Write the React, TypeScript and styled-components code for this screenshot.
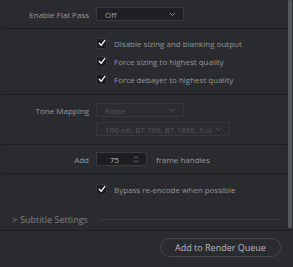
import React from "react";
import styled, { createGlobalStyle } from "styled-components";

const GlobalStyle = createGlobalStyle`
  html, body {
    margin: 0;
    padding: 0;
    background: #2a2b2f;
  }
  body {
    font-family: "Open Sans", "Noto Sans", sans-serif;
    -webkit-font-smoothing: antialiased;
  }
`;

const Page = styled.div`
  width: 293px;
  height: 267px;
  display: flex;
  flex-direction: column;
  background: #2a2b2f;
  overflow: hidden;
`;

const Main = styled.div`
  display: flex;
  height: 230px;
  border-bottom: 1px solid #1b1c1f;
`;

const Content = styled.div`
  flex: 1;
  display: flex;
  flex-direction: column;
  padding-left: 2px;
  padding-right: 1px;
`;

const Scrollbar = styled.div`
  width: 4px;
  margin: 0 1px 2px 0;
  background: #55595e;
  border-radius: 1px;
`;

const Section = styled.div<{ $pt: number; $pb: number; $gap?: number; $last?: boolean }>`
  display: flex;
  flex-direction: column;
  gap: ${(p) => p.$gap ?? 0}px;
  padding-top: ${(p) => p.$pt}px;
  padding-bottom: ${(p) => p.$pb}px;
  border-bottom: ${(p) => (p.$last ? "none" : "1px solid #1b1c1f")};
`;

const Row = styled.div<{ $h?: number }>`
  display: grid;
  grid-template-columns: 87px auto 1fr;
  column-gap: 7px;
  align-items: center;
  height: ${(p) => p.$h ?? 14}px;
  font-size: 8px;
  color: #999a9d;
`;

const Label = styled.span`
  text-align: right;
  white-space: nowrap;
`;

const Select = styled.div<{ $w: number; $disabled?: boolean }>`
  box-sizing: border-box;
  width: ${(p) => p.$w}px;
  height: 14px;
  display: flex;
  align-items: center;
  justify-content: space-between;
  padding: 0 7px 0 8px;
  background: ${(p) => (p.$disabled ? "#2b2c30" : "#1f2023")};
  border: 1px solid ${(p) => (p.$disabled ? "#37383c" : "#3a3b3f")};
  border-radius: 1px;
  color: ${(p) => (p.$disabled ? "#55565a" : "#9c9da0")};
  white-space: nowrap;
`;

const Chevron = ({ color }: { color: string }) => (
  <svg width="7" height="5" viewBox="0 0 7 5">
    <path d="M1 1 L3.5 3.5 L6 1" fill="none" stroke={color} strokeWidth="0.9" />
  </svg>
);

const Spinner = () => (
  <svg width="6" height="9" viewBox="0 0 6 9">
    <path d="M1 3.5 L3 1.5 L5 3.5" fill="none" stroke="#85868a" strokeWidth="0.9" />
    <path d="M1 5.5 L3 7.5 L5 5.5" fill="none" stroke="#85868a" strokeWidth="0.9" />
  </svg>
);

const NumberBox = styled.div`
  box-sizing: border-box;
  width: 51px;
  height: 14px;
  display: flex;
  align-items: center;
  justify-content: space-between;
  padding: 0 7px 0 13px;
  background: #1d1e21;
  border: 1px solid #3a3b3f;
  border-radius: 1px;
  color: #b8b9bc;
`;

const InlineGroup = styled.div`
  display: flex;
  align-items: center;
  gap: 9px;
  grid-column: 2 / 4;
`;

const CheckRow = styled.label`
  display: flex;
  align-items: center;
  gap: 7px;
  height: 18px;
  padding-left: 94px;
  font-size: 8px;
  color: #96979a;
  white-space: nowrap;
`;

const Box = styled.span`
  box-sizing: border-box;
  width: 11px;
  height: 11px;
  display: flex;
  align-items: center;
  justify-content: center;
  background: #1b1c1e;
  border: 1px solid #34353a;
  border-radius: 2px;
`;

const Check = () => (
  <Box>
    <svg width="8" height="8" viewBox="0 0 8 8">
      <path d="M1.3 4.3 L3.2 6.3 L6.8 1.4" fill="none" stroke="#f2f2f2" strokeWidth="1.4" strokeLinecap="round" strokeLinejoin="round" />
    </svg>
  </Box>
);

const Collapsible = styled.div`
  display: flex;
  align-items: center;
  height: 18px;
  margin-top: 12px;
  padding: 0 6px 0 10px;
  gap: 3px;
  font-size: 9px;
  color: #808184;
  white-space: nowrap;
`;

const Rule = styled.div`
  flex: 1;
  height: 1px;
  margin-left: 8px;
  background: #3a3b3f;
`;

const Footer = styled.div`
  flex: 1;
  display: flex;
  justify-content: flex-end;
  align-items: flex-start;
  padding: 7px 12px 0 0;
`;

const PillButton = styled.button`
  box-sizing: border-box;
  width: 121px;
  height: 19px;
  border-radius: 10px;
  border: 1px solid #45464b;
  background: #2a2b2f;
  color: #b9babd;
  font-family: "Open Sans", "Noto Sans", sans-serif;
  font-size: 9px;
  padding: 0;
`;

export default function App() {
  return (
    <Page>
      <GlobalStyle />
      <Main>
        <Content>
          <Section $pt={7} $pb={7}>
            <Row>
              <Label>Enable Flat Pass</Label>
              <Select $w={88}>
                <span>Off</span>
                <Chevron color="#9c9da0" />
              </Select>
            </Row>
          </Section>
          <Section $pt={5} $pb={6}>
            <CheckRow><Check />Disable sizing and blanking output</CheckRow>
            <CheckRow><Check />Force sizing to highest quality</CheckRow>
            <CheckRow><Check />Force debayer to highest quality</CheckRow>
          </Section>
          <Section $pt={8} $pb={8} $gap={5}>
            <Row>
              <Label>Tone Mapping</Label>
              <Select $w={88} $disabled>
                <span>None</span>
                <Chevron color="#55565a" />
              </Select>
            </Row>
            <Row>
              <span />
              <Select $w={134} $disabled>
                <span>100-nit, BT.709, BT.1886, Full</span>
                <Chevron color="#55565a" />
              </Select>
            </Row>
          </Section>
          <Section $pt={7} $pb={7}>
            <Row>
              <Label>Add</Label>
              <InlineGroup>
                <NumberBox>
                  <span>75</span>
                  <Spinner />
                </NumberBox>
                <span>frame handles</span>
              </InlineGroup>
            </Row>
          </Section>
          <Section $pt={6} $pb={1} $last>
            <CheckRow><Check />Bypass re-encode when possible</CheckRow>
            <Collapsible>
              <span>&gt;</span>
              <span>Subtitle Settings</span>
              <Rule />
            </Collapsible>
          </Section>
        </Content>
        <Scrollbar />
      </Main>
      <Footer>
        <PillButton>Add to Render Queue</PillButton>
      </Footer>
    </Page>
  );
}
